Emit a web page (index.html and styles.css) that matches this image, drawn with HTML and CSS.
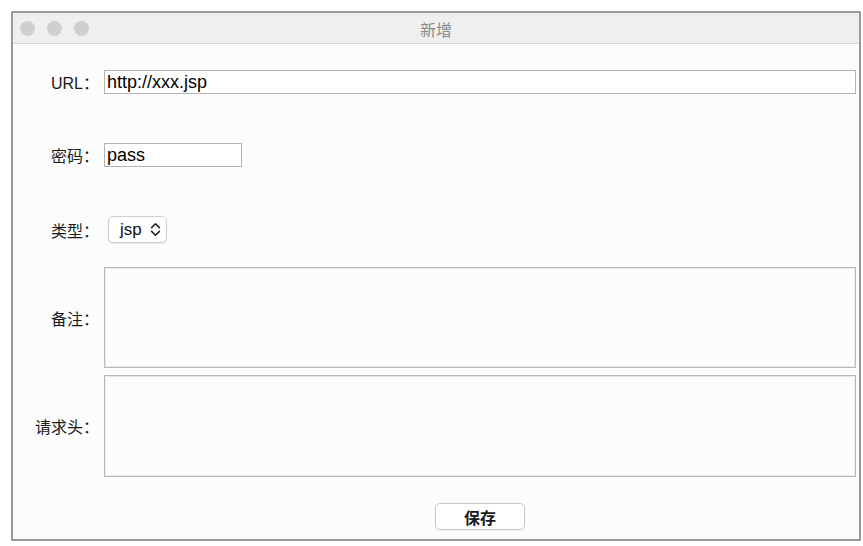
FILE: index.html
```html
<!DOCTYPE html>
<html lang="zh-CN">
<head>
  <meta charset="UTF-8" />
  <meta name="viewport" content="width=device-width, initial-scale=1.0" />
  <title>新增</title>
  <link rel="stylesheet" href="styles.css">
</head>
<body>
  <div class="window">
    <div class="titlebar">
      <div class="lights">
        <span class="light"></span>
        <span class="light"></span>
        <span class="light"></span>
      </div>
      <div class="title">新增</div>
      <div></div>
    </div>

    <form class="form">
      <div class="row row-url">
        <label for="url">URL：</label>
        <input id="url" class="field field-wide" value="http://xxx.jsp" />
      </div>

      <div class="row row-pass">
        <label for="pass">密码：</label>
        <input id="pass" class="field field-short" value="pass" />
      </div>

      <div class="row row-type">
        <label>类型：</label>
        <div class="select">
          <span>jsp</span>
          <svg width="11" height="15" viewBox="0 0 11 15">
            <path d="M1.6 5.6 L5.5 1.8 L9.4 5.6" fill="none" stroke="#222" stroke-width="1.6" stroke-linecap="round" stroke-linejoin="round"/>
            <path d="M1.6 9.4 L5.5 13.2 L9.4 9.4" fill="none" stroke="#222" stroke-width="1.6" stroke-linecap="round" stroke-linejoin="round"/>
          </svg>
        </div>
      </div>

      <div class="row row-note">
        <label for="note">备注：</label>
        <textarea id="note" class="area area-note"></textarea>
      </div>

      <div class="row row-head">
        <label for="head">请求头：</label>
        <textarea id="head" class="area area-head"></textarea>
      </div>

      <div class="row row-save">
        <span class="spacer"></span>
        <div class="save-wrap">
          <button type="button" class="save">保存</button>
        </div>
      </div>
    </form>
  </div>
</body>
</html>
```

FILE: styles.css
```css
body {
  margin: 0;
  background: #ffffff;
  font-family: 'Liberation Sans', 'Noto Sans CJK SC', sans-serif;
  color: #1a1a1a;
}

.window {
  box-sizing: border-box;
  width: 850px;
  height: 530px;
  margin: 11px 0 0 11px;
  border: 2px solid #9a9a9a;
  background: #fcfcfc;
}

.titlebar {
  display: grid;
  grid-template-columns: 1fr auto 1fr;
  align-items: center;
  height: 30px;
  background: #efefef;
  border-bottom: 1px solid #d6d6d6;
}

.lights {
  display: flex;
  gap: 12px;
  padding-left: 7px;
}

.light {
  width: 15px;
  height: 15px;
  border-radius: 50%;
  background: #cfcfcf;
}

.title {
  font-family: 'Noto Sans CJK SC', sans-serif;
  font-size: 16px;
  color: #8a8a8a;
  padding-top: 1px;
}

.form {
  padding: 26px 3px 0 0;
}

.row {
  display: flex;
  align-items: center;
  gap: 5px;
}

.row label {
  width: 86px;
  flex: none;
  text-align: right;
  font-family: 'Liberation Sans', 'Noto Sans CJK SC', sans-serif;
  font-size: 16px;
  color: #1a1a1a;
}

.row .spacer {
  width: 86px;
  flex: none;
}

.row-pass { margin-top: 49px; }
.row-type { margin-top: 49px; }
.row-note { margin-top: 24px; }
.row-head { margin-top: 7px; }
.row-save { margin-top: 26px; }

.field {
  box-sizing: border-box;
  height: 24px;
  margin: 0;
  padding: 0 2px;
  border: 1px solid #b4b4b4;
  background: #ffffff;
  font-family: 'Liberation Sans', sans-serif;
  font-size: 18px;
  color: #000;
  outline: none;
}

.field-wide {
  width: 752px;
}

.field-short {
  width: 138px;
}

.select {
  box-sizing: border-box;
  display: flex;
  align-items: center;
  gap: 8px;
  height: 27px;
  width: 59px;
  margin-left: 4px;
  padding: 0 0 0 11px;
  border: 1px solid #cdcdcd;
  border-radius: 5px;
  background: #ffffff;
  box-shadow: 0 1px 1px rgba(0,0,0,0.08);
  font-size: 17px;
  color: #111;
}

.select svg {
  flex: none;
}

.area {
  box-sizing: border-box;
  width: 752px;
  margin: 0;
  border: 1px solid #b9b9b9;
  box-shadow: inset 0 0 0 1px #e8e8e8;
  background: #fcfcfc;
  resize: none;
  outline: none;
}

.area-note {
  height: 101px;
}

.area-head {
  height: 102px;
}

.save-wrap {
  width: 752px;
  display: flex;
  justify-content: center;
}

.save {
  box-sizing: border-box;
  width: 90px;
  height: 27px;
  border: 1px solid #c6c6c6;
  border-radius: 5px;
  background: #ffffff;
  box-shadow: 0 1px 1px rgba(0,0,0,0.06);
  font-family: 'Noto Sans CJK SC', sans-serif;
  font-size: 16px;
  font-weight: 700;
  color: #1a1a1a;
  padding: 0;
}
```
